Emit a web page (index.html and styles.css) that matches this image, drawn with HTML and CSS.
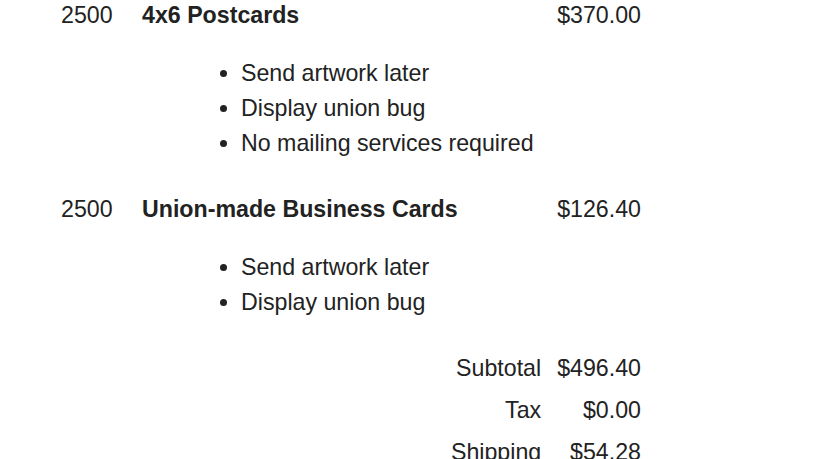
FILE: index.html
```html
<!DOCTYPE html>
<html>
<head>
<meta charset="utf-8">
<link rel="stylesheet" href="styles.css">
</head>
<body>
<div class="order">
  <div class="item">
    <div class="item-row">
      <span class="qty">2500</span>
      <span class="name">4x6 Postcards</span>
      <span class="price">$370.00</span>
    </div>
    <ul class="options">
      <li>Send artwork later</li>
      <li>Display union bug</li>
      <li>No mailing services required</li>
    </ul>
  </div>
  <div class="item">
    <div class="item-row">
      <span class="qty">2500</span>
      <span class="name">Union-made Business Cards</span>
      <span class="price">$126.40</span>
    </div>
    <ul class="options">
      <li>Send artwork later</li>
      <li>Display union bug</li>
    </ul>
  </div>
  <div class="totals">
    <span class="label">Subtotal</span><span class="value">$496.40</span>
    <span class="label">Tax</span><span class="value">$0.00</span>
    <span class="label">Shipping</span><span class="value">$54.28</span>
  </div>
</div>
</body>
</html>
```
FILE: styles.css
```css
html, body {
  margin: 0;
  padding: 0;
  background: #ffffff;
}
body {
  font-family: "Liberation Sans", Arial, sans-serif;
  font-size: 23.2px;
  color: #222222;
}
.order {
  width: 580px;
  margin-left: 61px;
}
.item-row {
  display: grid;
  grid-template-columns: 81px 1fr auto;
  line-height: 30px;
}
.name {
  font-weight: bold;
}
.price {
  text-align: right;
}
.options {
  margin: 26px 0 33px 0;
  padding: 0 0 0 180px;
  line-height: 35px;
}
.totals {
  display: grid;
  grid-template-columns: 1fr auto;
  column-gap: 16px;
  row-gap: 7px;
  line-height: 35px;
  margin-top: -2px;
  justify-items: end;
}
.totals .value {
  min-width: 83px;
  text-align: right;
}
.totals .label {
  text-align: right;
}
```
